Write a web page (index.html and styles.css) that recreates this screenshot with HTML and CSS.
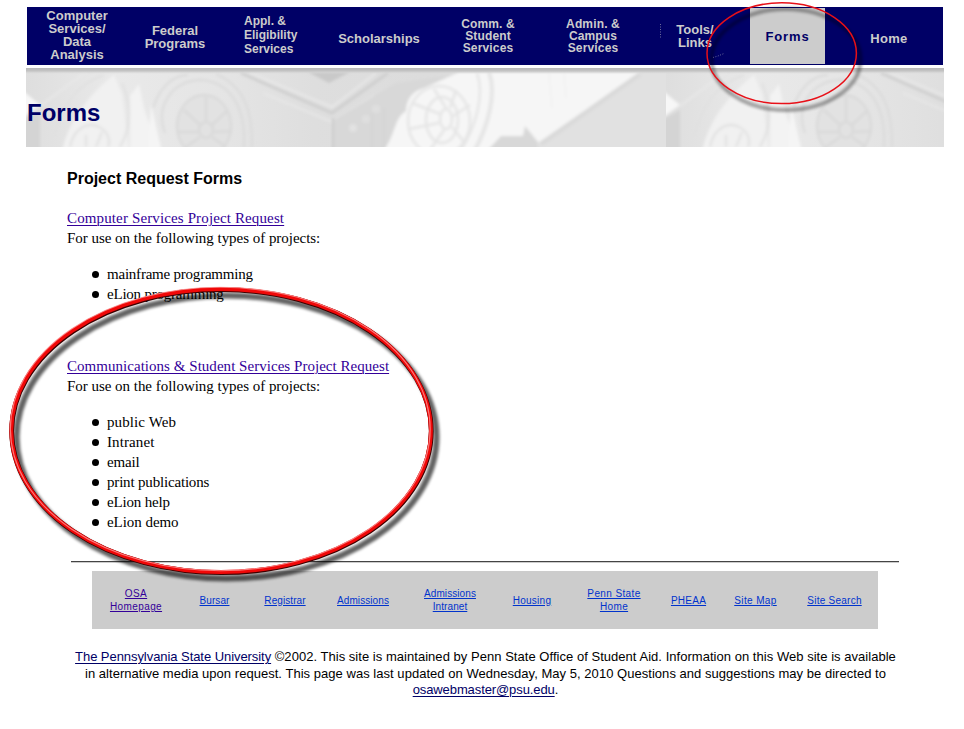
FILE: index.html
```html
<!DOCTYPE html>
<html lang="en">
<head>
<meta charset="utf-8">
<title>Forms</title>
<link rel="stylesheet" href="styles.css">
</head>
<body>
<div class="page">
  <nav class="nav">
    <a class="item computer">Computer<br>Services/<br>Data<br>Analysis</a>
    <a class="item federal">Federal<br>Programs</a>
    <a class="item appl">Appl. &amp;<br>Eligibility<br>Services</a>
    <a class="item scholar">Scholarships</a>
    <a class="item small">Comm. &amp;<br>Student<br>Services</a>
    <a class="item small">Admin. &amp;<br>Campus<br>Services</a>
    <a class="item tools">Tools/<br>Links</a>
    <a class="item current">Forms</a>
    <a class="item home">Home</a>
  </nav>

  <header class="banner">
    <svg class="banner-art" width="918" height="79" viewBox="0 0 918 79" aria-hidden="true">
      <defs>
        <filter id="soft" x="-10%" y="-10%" width="120%" height="120%"><feGaussianBlur stdDeviation="1.8"/></filter>
        <linearGradient id="edge" x1="0" y1="0" x2="0" y2="1">
          <stop offset="0" stop-color="#b8b8b8"/><stop offset=".5" stop-color="#c4c4c4"/><stop offset="1" stop-color="#d8d8d8" stop-opacity="0"/>
        </linearGradient>
        <linearGradient id="base" x1="0" y1="0" x2="1" y2="0">
          <stop offset="0" stop-color="#dedede"/><stop offset=".14" stop-color="#e9e9e9"/><stop offset=".3" stop-color="#e5e5e5"/><stop offset=".45" stop-color="#dedede"/><stop offset=".62" stop-color="#dcdcdc"/>
        </linearGradient>
        <clipPath id="bounds"><rect width="640" height="79"/></clipPath>
        <g id="tile" clip-path="url(#bounds)">
          <rect width="640" height="79" fill="url(#base)"/>
          <g filter="url(#soft)" fill="none">
            <path d="M-4 22L14 37L-4 50Z" fill="#f7f7f7"/>
            <path d="M-4 52L14 42V84H-4Z" fill="#d4d4d4"/>
            <path d="M36 84C42 50 70 20 88 7L96 26L103 84Z" fill="#f1f1f1"/>
            <path d="M104 84V28L113 16L118 40L133 84Z" fill="#f3f3f3"/>
            <path d="M125 36L136 84H122Z" fill="#f5f5f5"/>
            <g stroke="#e0e0e0" stroke-width="2">
              <path d="M28 70C35 38 52 15 78 7M96 15C106 38 105 60 94 79M44 79C48 58 64 53 75 60C84 66 84 75 82 79M60 79V67M70 79L76 64"/>
              <path d="M14 38L60 4" stroke="#e8e8e8"/>
            </g>
            <g stroke="#d8d8d8" stroke-width="2">
              <ellipse cx="178" cy="58" rx="27" ry="31" fill="#e2e2e2"/>
              <ellipse cx="180" cy="62" rx="7" ry="8"/>
              <path d="M180 54V29M186 57L202 42M188 64L206 63M174 57L158 42M173 64L152 64M174 69L160 79M186 69L200 79"/>
              <path d="M127 40C134 18 148 7 162 7M190 6C218 18 227 43 226 79M139 65C129 38 146 12 176 12C207 15 220 43 218 79" stroke="#dadada"/>
            </g>
            <path d="M215 5L306 45L362 5" stroke="#cfcfcf" stroke-width="3"/>
            <path d="M224 5L306 39L350 5" stroke="#e8e8e8" stroke-width="2"/>
            <path d="M237 25L306 54L348 28" stroke="#e7e7e7" stroke-width="2"/>
            <path d="M282 4H324L303 15Z" fill="#c9c9c9"/>
            <path d="M308 52L370 15L440 5L385 40L360 84H308Z" fill="#d8d8d8"/>
            <path d="M307 50V84" stroke="#cbcbcb" stroke-width="2"/>
            <circle cx="327" cy="60" r="4" fill="#e2e2e2"/><circle cx="340" cy="51" r="4" fill="#dfdfdf"/><circle cx="350" cy="41" r="4" fill="#dfdfdf"/>
            <path d="M346 45V84M358 40V84" stroke="#d0d0d0"/>
            <path d="M357 84C370 66 368 50 380 43C380 32 386 23 398 20L433 4H615L512 75L515 84Z" fill="#f6f6f6"/>
            <g stroke="#e5e5e5" stroke-width="2.5">
              <ellipse cx="413" cy="53" rx="31" ry="35"/>
              <ellipse cx="416" cy="52" rx="16" ry="23"/>
              <ellipse cx="420" cy="51" rx="6" ry="10"/>
              <path d="M420 40L408 21M414 46L386 35M413 55L383 61M418 62L404 82M426 59L438 74M427 48L444 37M424 40L430 22"/>
              <path d="M463 4C471 26 462 58 448 84" stroke-width="4"/>
              <path d="M451 5C459 27 450 58 434 84"/>
            </g>
            <path d="M523 5L526 40M538 5L540 30" stroke="#eeeeee"/>
            <path d="M460 84L475 68H497L499 58L512 74L520 84Z" fill="#d8d8d8"/>
            <path d="M511 76L615 4H650V84H514Z" fill="#e1e1e1"/>
            <path d="M515 76L614 6" stroke="#d9d9d9" stroke-width="4"/>
          </g>
          <rect width="640" height="6" fill="url(#edge)"/>
        </g>
      </defs>
      <use href="#tile"/>
      <use href="#tile" x="640"/>
    </svg>
    <h1>Forms</h1>
  </header>

  <main class="content">
    <h2>Project Request Forms</h2>
    <section>
      <a class="request computer-link">Computer Services Project Request</a>
      <p>For use on the following types of projects:</p>
      <ul><li class="tight">mainframe programming</li><li class="tight">eLion programming</li></ul>
    </section>
    <section>
      <a class="request">Communications &amp; Student Services Project Request</a>
      <p>For use on the following types of projects:</p>
      <ul><li class="wide">public Web</li><li class="wide">Intranet</li><li>email</li><li>print publications</li><li>eLion help</li><li class="even">eLion demo</li></ul>
    </section>
  </main>

  <hr>
  <div class="links">
    <a class="visited">OSA<br>Homepage</a>
    <a class="plain">Bursar</a>
    <a class="plain">Registrar</a>
    <a class="plain">Admissions</a>
    <a class="plain">Admissions<br>Intranet</a>
    <a>Housing</a>
    <a class="spaced">Penn State<br>Home</a>
    <a>PHEAA</a>
    <a class="spaced">Site Map</a>
    <a>Site Search</a>
  </div>
  <footer><a>The Pennsylvania State University</a> ©2002. This site is maintained by Penn State Office of Student Aid. Information on this Web site is available<br>in alternative media upon request. This page was last updated on Wednesday, May 5, 2010 Questions and suggestions may be directed to<br><a class="mail">osawebmaster@psu.edu</a>.</footer>

  <svg class="marks" width="964" height="729" viewBox="0 0 964 729" aria-hidden="true">
    <defs>
      <filter id="shade" x="-10%" y="-10%" width="120%" height="120%"><feGaussianBlur stdDeviation="1.8"/></filter>
      <filter id="sheen" x="-5%" y="-5%" width="110%" height="110%"><feGaussianBlur stdDeviation=".5"/></filter>
    </defs>
    <g fill="none">
      <g stroke="#6b6b9a" stroke-dasharray="1 1.5"><path d="M660.5 24V39M713 57.500L718 56L724 53.500"/></g>
      <ellipse cx="786" cy="59.500" rx="74.500" ry="50.500" stroke="#000" stroke-width="4" opacity=".35" filter="url(#shade)"/>
      <ellipse cx="781.700" cy="53.200" rx="74.700" ry="50.400" stroke="#e81018" stroke-width="1.500"/>
      <ellipse cx="226.500" cy="437" rx="210" ry="141.500" stroke="#000" stroke-width="6" opacity=".62" filter="url(#shade)"/>
      <ellipse cx="221.500" cy="431.200" rx="209.800" ry="141.500" stroke="#3c0000" stroke-width="4.800"/>
      <ellipse cx="221.100" cy="430.500" rx="209.800" ry="141.500" stroke="#f00808" stroke-width="3.900"/>
      <ellipse cx="220.300" cy="429" rx="209.900" ry="141.700" stroke="#ffa0a0" stroke-width="1.100" opacity=".75" filter="url(#sheen)"/>
    </g>
  </svg>
</div>
</body>
</html>
```

FILE: styles.css
```css
* { box-sizing: border-box; }

body {
  margin: 0;
  background: #fff;
  color: #000;
  font-family: "Liberation Sans", Arial, sans-serif;
}

.page {
  position: relative;
  width: 964px;
  height: 729px;
  padding-top: 7px;
  overflow: hidden;
}

.nav {
  display: grid;
  grid-template-columns: 100px 96px 94px 124px 94px 116px 99px 75px 118px;
  width: 916px;
  height: 58px;
  margin-left: 27px;
  background: #000066;
}

.item {
  color: #ccc;
  font-size: 13px;
  font-weight: bold;
  line-height: 13px;
  text-align: center;
  white-space: nowrap;
}

.computer { padding-top: 2px; }
.federal { padding-top: 17px; }
.appl {
  padding: 7px 0 0 21px;
  font-size: 12px;
  line-height: 14px;
  text-align: left;
}
.scholar { padding-top: 25px; }
.small {
  padding-top: 11px;
  font-size: 12px;
  line-height: 12px;
  letter-spacing: .15px;
}
.tools { padding: 16px 11px 0 0; }
.current {
  height: 56px;
  margin-top: 1px;
  padding-top: 22px;
  background: #ccc;
  color: #000066;
  letter-spacing: .9px;
}
.home { padding: 25px 0 0 10px; letter-spacing: .3px; }

.banner {
  display: grid;
  width: 918px;
  height: 79px;
  margin: 3px 0 0 26px;
}

.banner-art, .banner h1 { grid-area: 1 / 1; }
.banner-art { display: block; }

.banner h1 {
  z-index: 1;
  margin: 31px 0 0 1px;
  color: #000066;
  font-size: 24px;
  line-height: 28px;
}

.content {
  padding: 22px 0 0 67px;
  font-family: "Liberation Serif", "Times New Roman", serif;
  font-size: 15px;
  line-height: 20px;
}

h2 {
  margin: 0 0 19px;
  font-family: "Liberation Sans", Arial, sans-serif;
  font-size: 16px;
  line-height: 20px;
}

.request {
  display: block;
  width: max-content;
  color: #330099;
  letter-spacing: .035px;
  text-decoration: underline;
  text-underline-offset: 2px;
  text-decoration-thickness: 1px;
}
.computer-link { letter-spacing: .13px; }

p { margin: 0 0 16px; letter-spacing: -.03px; }

ul { margin: 0 0 52px; padding: 0; list-style: none; }
section:last-child ul { margin-bottom: 29px; }

li {
  display: flex;
  align-items: center;
  gap: 8px;
  padding-left: 25px;
  letter-spacing: -.18px;
}
li::before {
  content: "";
  width: 7px;
  height: 7px;
  border-radius: 50%;
  background: #000;
}
.tight { letter-spacing: -.22px; }
.wide { letter-spacing: .1px; }
.even { letter-spacing: -.05px; }

hr {
  width: 828px;
  height: 2px;
  margin: 0 0 8px 71px;
  border: 0;
  border-top: 1px solid #444;
  background: #ccc;
}

.links {
  display: grid;
  grid-template-columns: 88px 69px 72px 84px 90px 74px 90px 59px 75px 83px;
  align-items: center;
  width: 786px;
  height: 58px;
  margin-left: 92px;
  background: #ccc;
  color: #0033cc;
  font-size: 10px;
  line-height: 13px;
  letter-spacing: .25px;
  text-align: center;
}
.links a {
  text-decoration: underline;
  text-underline-offset: 1px;
}
.visited { color: #330099; letter-spacing: .4px; }
.plain { letter-spacing: .08px; }
.spaced { letter-spacing: .38px; }

footer {
  margin: 20px 0 0 7px;
  font-size: 13px;
  line-height: 16.500px;
  letter-spacing: .035px;
  text-align: center;
  white-space: nowrap;
}
footer a {
  color: #000066;
  letter-spacing: -.06px;
  text-decoration: underline;
  text-underline-offset: 2px;
}
footer .mail { letter-spacing: -.1px; }

.marks {
  position: absolute;
  inset: 0;
  pointer-events: none;
}
```
